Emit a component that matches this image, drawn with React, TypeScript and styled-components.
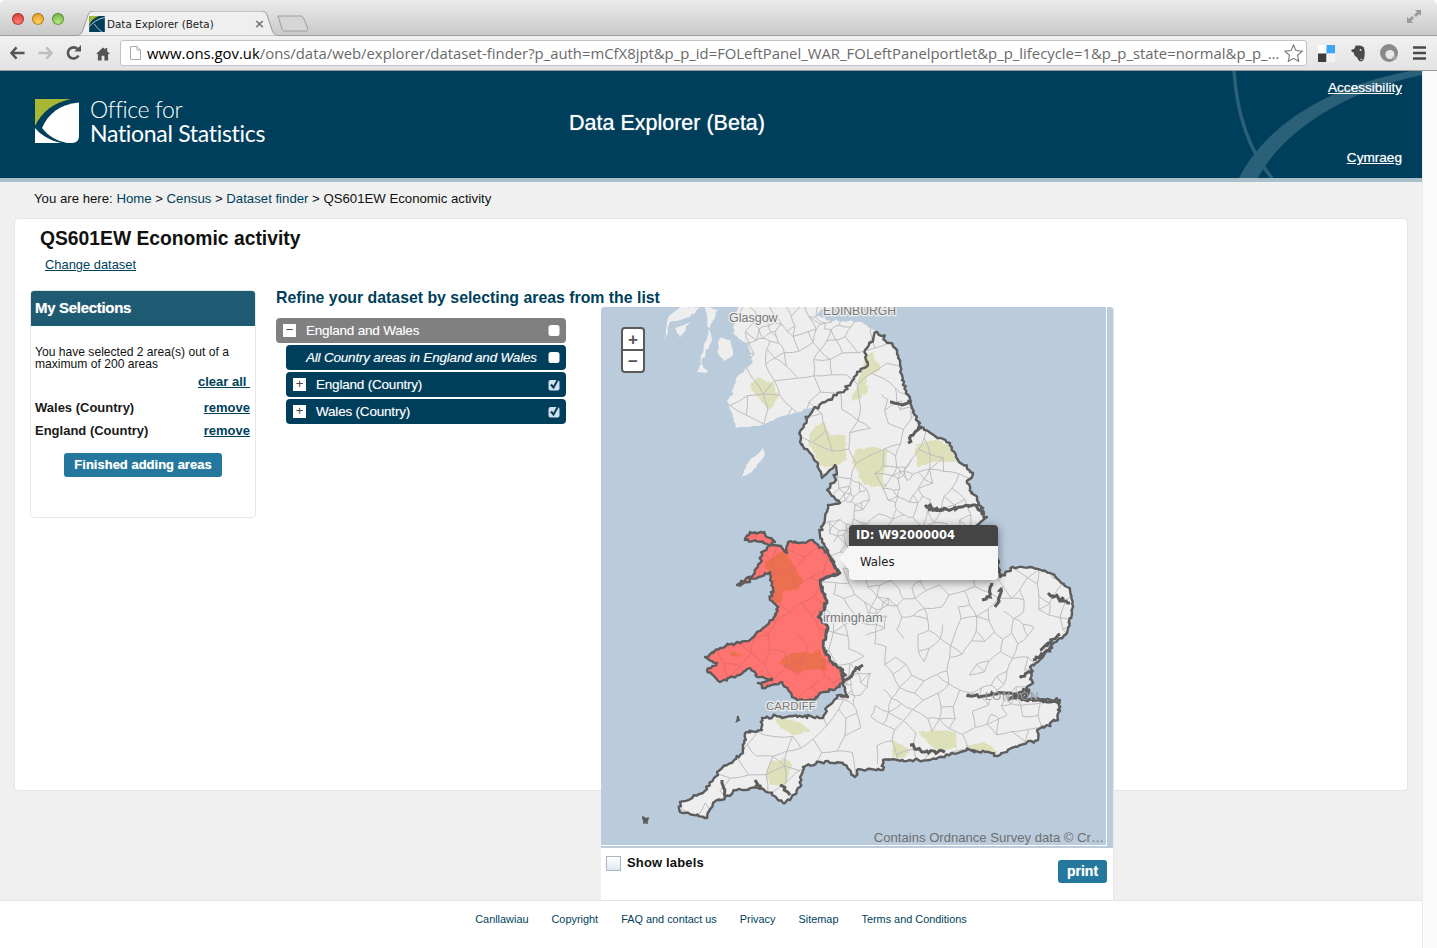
import React from "react";
import styled, { createGlobalStyle } from "styled-components";

const Global = createGlobalStyle`
  html, body { margin: 0; padding: 0; height: 948px; overflow: hidden; background: #fff; }
  body { font-family: "Liberation Sans", Arial, sans-serif; }
  * { box-sizing: border-box; }
`;

const NAVY = "#003f5c";
const TEAL = "#24789d";
const COAST = "#5c5c5c";

/* ---------- procedural map helpers ---------- */
function makeRng(seed: number) {
  let s = seed;
  return () => {
    s = (s * 16807) % 2147483647;
    return (s - 1) / 2147483646;
  };
}
type P = [number, number];

function rough(points: P[], amp: number, seed: number, step = 2.5, close = true): string {
  const r = makeRng(seed);
  r();
  r();
  const out: string[] = [];
  const n = points.length;
  const last = close ? n : n - 1;
  for (let i = 0; i < last; i++) {
    const a = points[i];
    const b = points[(i + 1) % n];
    const len = Math.hypot(b[0] - a[0], b[1] - a[1]);
    const k = Math.max(1, Math.round(len / step));
    for (let j = 0; j < k; j++) {
      const t = j / k;
      const spike = r() < 0.12 ? 2 : 1;
      const jx = j === 0 ? 0 : (r() - 0.5) * amp * 2 * spike;
      const jy = j === 0 ? 0 : (r() - 0.5) * amp * 2 * spike;
      out.push(`${(a[0] + (b[0] - a[0]) * t + jx).toFixed(1)} ${(a[1] + (b[1] - a[1]) * t + jy).toFixed(1)}`);
    }
  }
  if (!close) out.push(`${points[n - 1][0]} ${points[n - 1][1]}`);
  return "M" + out.join("L") + (close ? "Z" : "");
}

const walesPts: P[] = [
  [745, 540], [750, 532], [763, 533], [775, 542], [762, 553], [760, 563], [750, 577], [737, 585], [750, 582], [770, 572], [773, 587],
  [770, 600], [778, 607], [773, 620], [763, 628], [750, 640], [737, 642], [720, 648], [705, 657], [717, 663], [707, 670], [720, 682],
  [733, 677], [750, 668], [757, 677], [772, 680], [758, 683], [762, 688], [782, 682], [788, 690], [797, 700], [815, 700], [820, 693],
  [833, 690], [843, 683], [843, 670], [832, 662], [823, 647], [828, 627], [818, 617], [827, 603], [823, 593], [820, 580], [840, 573],
  [833, 563], [828, 553], [813, 540], [800, 543], [788, 542], [787, 553], [781, 546],
];

const englandPts: P[] = [
  [877, 332], [890, 343], [897, 350], [900, 363], [902, 380], [910, 403], [920, 427], [935, 436], [950, 443], [958, 460],
  [973, 473], [967, 483], [977, 500], [987, 517], [975, 527], [985, 540], [998, 560], [1000, 577], [1013, 567], [1030, 567],
  [1050, 573], [1067, 587], [1072, 600], [1072, 612], [1067, 633], [1050, 647], [1043, 657], [1030, 667], [1033, 683],
  [1013, 697], [1040, 700], [1060, 700], [1058, 720], [1037, 730], [1038, 740], [1020, 745], [998, 756], [985, 752], [967, 750],
  [943, 757], [930, 760], [910, 760], [883, 760], [883, 770], [857, 770], [855, 777], [843, 763], [820, 762], [803, 767], [800, 787],
  [790, 800], [783, 803], [772, 795], [760, 787], [737, 790], [725, 797], [713, 803], [707, 818], [680, 812], [680, 802], [703, 793],
  [717, 772], [743, 753], [745, 733], [762, 730], [762, 718], [790, 716], [823, 718], [827, 707], [840, 695], [848, 697],
  [843, 683], [843, 670], [832, 662], [823, 647], [828, 627], [818, 617], [827, 603], [823, 593], [820, 580], [840, 573], [833, 563], [828, 553],
  [820, 535], [825, 518], [828, 505], [840, 503], [827, 490], [836, 480], [835, 465], [822, 478], [818, 465], [812, 455],
  [800, 442], [800, 432], [812, 412], [815, 407], [828, 400], [845, 390], [857, 372], [868, 365], [865, 350],
];

const scotlandPts: P[] = [
  [740, 300], [733, 333], [747, 343], [753, 362], [737, 377], [733, 393], [727, 400], [737, 428], [763, 425], [780, 417], [815, 407],
  [828, 400], [845, 390], [857, 372], [868, 365], [865, 350], [877, 332], [860, 322], [835, 320], [815, 316], [826, 307], [830, 300],
];

const islands: P[][] = [
  [[763, 448], [750, 460], [741, 478], [752, 472], [765, 455]],
  [[720, 338], [730, 340], [733, 355], [724, 361], [717, 352]],
  [[700, 362], [704, 345], [712, 322], [718, 310], [705, 307], [712, 340], [697, 372], [708, 372]],
  [[665, 340], [670, 322], [690, 317], [700, 307], [680, 307], [668, 318]],
  [[675, 328], [690, 322], [680, 338]],
];

const parks: P[][] = [
  [[760, 378], [775, 385], [778, 398], [770, 410], [755, 395], [750, 385]],
  [[815, 425], [825, 422], [830, 435], [845, 435], [847, 460], [835, 468], [820, 465], [808, 442]],
  [[855, 450], [875, 447], [888, 452], [883, 480], [887, 487], [865, 485], [852, 462]],
  [[915, 445], [935, 440], [950, 445], [957, 462], [930, 462], [917, 468]],
  [[865, 357], [872, 352], [880, 370], [868, 375], [868, 392], [852, 402], [857, 385]],
  [[775, 718], [800, 722], [810, 730], [795, 735], [780, 728]],
  [[770, 762], [785, 758], [792, 765], [785, 785], [772, 785], [765, 775]],
  [[892, 740], [910, 750], [905, 757], [892, 757]],
  [[918, 732], [940, 730], [955, 732], [957, 748], [935, 750]],
  [[965, 745], [985, 743], [1000, 753], [980, 752]],
];

const darkPatches: P[][] = [
  [[765, 563], [783, 550], [797, 570], [803, 580], [797, 590], [783, 590], [782, 603], [773, 603], [772, 577]],
  [[778, 663], [790, 653], [813, 653], [820, 650], [828, 670], [807, 670], [797, 673]],
  [[730, 652], [742, 655], [733, 657]],
];

const estuaries: P[][] = [
  [[890, 402], [905, 404], [912, 402]],
  [[908, 443], [915, 432], [922, 428]],
  [[925, 505], [938, 510], [962, 507], [975, 505], [985, 513]],
  [[928, 510], [945, 508]],
  [[992, 583], [990, 597], [982, 600]],
  [[1002, 588], [995, 607]],
  [[1048, 593], [1070, 603]],
  [[967, 697], [1007, 693], [1027, 700], [1060, 702]],
  [[1008, 700], [1030, 690], [1025, 698]],
  [[1020, 678], [1033, 670]],
  [[1033, 660], [1053, 647]],
  [[1040, 650], [1060, 634]],
  [[910, 745], [925, 752], [945, 752]],
  [[843, 683], [863, 665]],
  [[840, 695], [848, 698]],
  [[722, 780], [725, 797]],
  [[755, 780], [760, 790]],
  [[780, 785], [790, 795]],
];

function buildRoads(): string {
  const r = makeRng(987654);
  r();
  r();
  const hubs: P[] = [[905, 498], [878, 612], [1000, 700], [905, 470], [855, 500], [770, 332], [825, 322], [850, 690], [905, 402], [840, 530]];
  const pts: P[] = [];
  const spacing = (x: number, y: number) => {
    const base = y > 470 && x > 820 && y < 730 ? 11 : 14;
    let d = base;
    for (const h of hubs) {
      d = Math.min(d, 3 + Math.hypot(x - h[0], y - h[1]) * 0.28);
    }
    return d;
  };
  for (let c = 0; c < 12000; c++) {
    const x = 655 + r() * 425;
    const y = 300 + r() * 525;
    const d = spacing(x, y);
    let ok = true;
    for (const q of pts) {
      if (Math.abs(q[0] - x) < d && Math.hypot(q[0] - x, q[1] - y) < d) {
        ok = false;
        break;
      }
    }
    if (ok) pts.push([x, y]);
  }
  const seen = new Set<string>();
  const parts: string[] = [];
  pts.forEach((a, i) => {
    const near = pts
      .map((q, j) => [Math.hypot(q[0] - a[0], q[1] - a[1]), j] as [number, number])
      .filter((e) => e[1] !== i && e[0] < 40)
      .sort((u, v) => u[0] - v[0])
      .slice(0, 3);
    near.forEach(([, j], idx) => {
      if (idx > 0 && r() > 0.62) return;
      const k = i < j ? `${i}-${j}` : `${j}-${i}`;
      if (seen.has(k)) return;
      seen.add(k);
      const b = pts[j];
      const mx = (a[0] + b[0]) / 2 + (r() - 0.5) * 4;
      const my = (a[1] + b[1]) / 2 + (r() - 0.5) * 4;
      parts.push(`M${a[0].toFixed(1)} ${a[1].toFixed(1)}Q${mx.toFixed(1)} ${my.toFixed(1)} ${b[0].toFixed(1)} ${b[1].toFixed(1)}`);
    });
  });
  return parts.join("");
}

const walesD = rough(walesPts, 1.4, 77);
const englandD = rough(englandPts, 1.4, 91);
const scotlandD = rough(scotlandPts, 1.1, 33);
const roadsD = buildRoads();

/* ---------- browser chrome ---------- */
const Browser = styled.div`
  height: 71px;
  display: flex;
  flex-direction: column;
`;
const TitleBar = styled.div`
  height: 36px;
  background: linear-gradient(#ebebeb, #c9c9c9);
  border-bottom: 1px solid #9c9c9c;
  border-radius: 5px 5px 0 0;
  display: flex;
  align-items: flex-end;
  padding: 0 15px 0 12px;
`;
const Lights = styled.div`
  display: flex;
  gap: 8px;
  align-self: flex-start;
  margin-top: 13px;
  width: 63px;
`;
const Light = styled.span<{ $c: string; $d: string }>`
  width: 12px;
  height: 12px;
  border-radius: 50%;
  background: radial-gradient(circle at 50% 75%, ${(p) => p.$c}, ${(p) => p.$d});
  box-shadow: inset 0 0 0 1px rgba(0, 0, 0, 0.25);
`;
const Tab = styled.div`
  position: relative;
  width: 205px;
  height: 25px;
  margin-bottom: -1px;
  flex: none;
  display: flex;
  align-items: center;
  padding: 0 15px 0 14px;
  font: 10.4px "DejaVu Sans", sans-serif;
  color: #222;
`;
const TabShape = styled.svg`
  position: absolute;
  left: 0;
  top: 0;
`;
const TabIcon = styled.svg`
  position: relative;
  margin-right: 2px;
  flex: none;
`;
const TabLabel = styled.span`
  position: relative;
  flex: 1;
  white-space: nowrap;
`;
const TabClose = styled.span`
  position: relative;
  font: bold 13px "DejaVu Sans", sans-serif;
  color: #777;
`;
const NewTab = styled.svg`
  flex: none;
  margin: 0 0 3px -3px;
`;
const Resize = styled.svg`
  margin-left: auto;
  align-self: flex-start;
  margin-top: 9px;
`;
const ToolBar = styled.div`
  height: 35px;
  background: linear-gradient(#f1f1f1, #e3e3e3);
  border-bottom: 1px solid #9a9a9a;
  display: flex;
  align-items: center;
  padding: 0 0 0 10px;
`;
const NavIcon = styled.svg<{ $mr: number }>`
  flex: none;
  margin-right: ${(p) => p.$mr}px;
`;
const Omnibox = styled.div`
  width: 1187px;
  height: 26px;
  flex: none;
  background: #fff;
  border: 1px solid #c2c2c2;
  border-radius: 3px;
  display: flex;
  align-items: center;
  padding: 0 3px 0 9px;
  margin-right: 11px;
`;
const Url = styled.div`
  flex: 1;
  margin-left: 6px;
  font: 14.86px "Open Sans", sans-serif;
  color: #6a6a6a;
  white-space: nowrap;
  overflow: hidden;
  b { font-weight: 400; color: #000; }
`;

/* ---------- page ---------- */
const Viewport = styled.div`
  display: flex;
  height: 877px;
`;
const Main = styled.div`
  width: 1422px;
  flex: none;
  display: flex;
  flex-direction: column;
`;
const Scrollbar = styled.div`
  flex: 1;
  background: #fafafa;
  border-left: 1px solid #ececec;
`;
const Header = styled.header`
  height: 111px;
  flex: none;
  background: ${NAVY};
  border-bottom: 4px solid #a9bfc9;
  position: relative;
  display: flex;
  align-items: flex-start;
  padding-left: 35px;
  overflow: hidden;
  color: #fff;
`;
const Swoosh = styled.svg`
  position: absolute;
  right: 0;
  top: 0;
`;
const Logo = styled.div`
  display: flex;
  gap: 10px;
  padding-top: 28px;
  width: 534px;
  flex: none;
`;
const LogoText = styled.div`
  font-family: "Lato", sans-serif;
  font-size: 23px;
  color: #fff;
  white-space: nowrap;
  margin-top: -2px;
`;
const LogoThin = styled.div`
  font-weight: 300;
  line-height: 24px;
  letter-spacing: -0.4px;
`;
const LogoStrong = styled.div`
  font-weight: 400;
  line-height: 24px;
  letter-spacing: -0.3px;
`;
const SiteTitle = styled.h1`
  margin: 38px 0 0;
  font: 400 21.5px/28px "Liberation Sans", sans-serif;
  color: #fff;
  text-shadow: 0 0 1px rgba(255, 255, 255, 0.7);
  white-space: nowrap;
`;
const HeaderLinks = styled.div`
  position: absolute;
  right: 20px;
  top: 8px;
  height: 88px;
  display: flex;
  flex-direction: column;
  justify-content: space-between;
  align-items: flex-end;
`;
const HeaderLink = styled.a`
  font-size: 13.6px;
  line-height: 18px;
  color: #fff;
  text-decoration: underline;
  text-shadow: 0 0 1px rgba(255, 255, 255, 0.6);
`;
const Content = styled.div`
  height: 718px;
  flex: none;
  background: #f0f0f0;
  padding: 0 14px;
`;
const Crumb = styled.div`
  font-size: 13.2px;
  height: 36px;
  line-height: 33px;
  padding-left: 20px;
  color: #111;
  a { color: ${NAVY}; }
`;
const Card = styled.div`
  height: 573px;
  background: #fff;
  border: 1px solid #e6e6e6;
  border-radius: 4px;
  padding: 7px 0 0 15px;
`;
const PageTitle = styled.h2`
  margin: 0 0 0 10px;
  font: 700 19.3px/26px "Liberation Sans", sans-serif;
  color: #111;
`;
const ChangeLink = styled.a`
  display: block;
  margin: 5px 0 0 15px;
  font-size: 12.9px;
  line-height: 16px;
  color: ${NAVY};
  text-decoration: underline;
`;
const Columns = styled.div`
  display: flex;
  margin-top: 17px;
  align-items: flex-start;
`;
const SidePanel = styled.aside`
  width: 226px;
  height: 228px;
  flex: none;
  background: #fff;
  border: 1px solid #e6e6e6;
  border-radius: 4px;
  overflow: hidden;
  margin-right: 20px;
`;
const PanelHead = styled.div`
  height: 36px;
  background: #1f5a73;
  color: #fff;
  font: 700 15px/36px "Liberation Sans", sans-serif;
  padding-left: 5px;
  margin: -1px -1px 0;
  text-shadow: 0 0 1px rgba(255, 255, 255, 0.5);
  letter-spacing: -0.3px;
`;
const PanelBody = styled.div`
  padding: 20px 5px 0 4px;
`;
const Info = styled.p`
  margin: 0;
  font-size: 12.1px;
  line-height: 12px;
  color: #111;
`;
const ClearRow = styled.div`
  text-align: right;
  margin-top: 5px;
  margin-bottom: 11px;
  font: 700 13px/14px "Liberation Sans", sans-serif;
  a { color: ${NAVY}; text-decoration: underline; white-space: pre; }
`;
const SelRow = styled.div`
  display: flex;
  justify-content: space-between;
  font: 700 13px/16px "Liberation Sans", sans-serif;
  color: #1a1a1a;
  margin-bottom: 7px;
  a { color: ${NAVY}; text-decoration: underline; }
`;
const FinishButton = styled.button`
  display: block;
  width: 158px;
  height: 24px;
  margin: 14px 0 0 29px;
  border: 0;
  border-radius: 3px;
  background: ${TEAL};
  color: #fff;
  font: 700 13px/24px "Liberation Sans", sans-serif;
  padding: 0;
  text-shadow: 0 0 1px rgba(255, 255, 255, 0.5);
`;
const RightCol = styled.section`
  flex: none;
  width: 838px;
`;
const TreeTitle = styled.h3`
  margin: -1px 0 0;
  font: 700 15.85px/18px "Liberation Sans", sans-serif;
  color: ${NAVY};
  white-space: nowrap;
`;
const TreeAndMap = styled.div`
  display: flex;
  align-items: flex-start;
  gap: 35px;
`;
const Tree = styled.div`
  width: 290px;
  flex: none;
  margin-top: 11px;
  display: flex;
  flex-direction: column;
  gap: 2px;
`;
const TreeRow = styled.div<{ $root?: boolean }>`
  height: 25px;
  margin-left: ${(p) => (p.$root ? 0 : 10)}px;
  background: ${(p) => (p.$root ? "#808080" : NAVY)};
  border-radius: 4px;
  display: flex;
  align-items: center;
  padding: 0 5px 0 7px;
  color: #fff;
  font-size: 13.5px;
`;
const Toggle = styled.span`
  width: 13px;
  height: 13px;
  flex: none;
  background: #fff;
  color: #444;
  font: 13px/12px "Liberation Sans", sans-serif;
  text-align: center;
  margin-right: 10px;
`;
const RowLabel = styled.span<{ $italic?: boolean }>`
  flex: 1;
  white-space: nowrap;
  letter-spacing: -0.2px;
  font-style: ${(p) => (p.$italic ? "italic" : "normal")};
  padding-left: ${(p) => (p.$italic ? 13 : 0)}px;
  text-shadow: 0 0 1px rgba(255, 255, 255, 0.35);
`;
const Tick = styled.svg`
  flex: none;
`;
const MapCol = styled.section`
  width: 513px;
  flex: none;
  height: 593px;
  background: #fff;
  border-right: 1px solid #e6e6e6;
  position: relative;
`;
const MapFrame = styled.div`
  position: relative;
  height: 541px;
  border-radius: 3px 3px 0 0;
  overflow: hidden;
  background: #bacbdc;
`;
const MapSvg = styled.svg`
  display: block;
`;
const ZoomBox = styled.div`
  position: absolute;
  left: 20px;
  top: 20px;
  width: 24px;
  height: 46px;
  border: 2px solid #5a5a5a;
  border-radius: 4px;
  background: #fff;
  display: flex;
  flex-direction: column;
`;
const ZoomBtn = styled.div`
  flex: 1;
  display: flex;
  align-items: center;
  justify-content: center;
  font: 700 17px/1 "Liberation Sans", sans-serif;
  color: #555;
  & + & { border-top: 2px solid #5a5a5a; }
`;
const Attribution = styled.div`
  position: absolute;
  right: 9px;
  bottom: 2px;
  font-size: 13.1px;
  line-height: 16px;
  color: #6f6f6f;
  white-space: nowrap;
`;
const Tip = styled.div`
  position: absolute;
  left: 248px;
  top: 218px;
  width: 149px;
  border-radius: 4px;
  background: #f6f6f6;
  box-shadow: 0 2px 10px rgba(0, 0, 0, 0.45);
`;
const TipHead = styled.div`
  height: 21px;
  background: #444;
  color: #fff;
  border-radius: 4px 4px 0 0;
  font: 700 11.5px/21px "DejaVu Sans", sans-serif;
  padding-left: 7px;
`;
const TipBody = styled.div`
  height: 34px;
  font: 11.7px/33px "DejaVu Sans", sans-serif;
  color: #222;
  padding-left: 11px;
`;
const TipArrow = styled.span`
  position: absolute;
  left: -10px;
  top: 21px;
  width: 0;
  height: 0;
  border-style: solid;
  border-width: 12px 10px 12px 0;
  border-color: transparent #f6f6f6 transparent transparent;
`;
const MapFoot = styled.div`
  display: flex;
  justify-content: space-between;
  align-items: flex-start;
  padding: 8px 6px 0 5px;
`;
const ShowLabels = styled.label`
  display: flex;
  gap: 6px;
  font: 700 13px/13px "Liberation Sans", sans-serif;
  color: #111;
  letter-spacing: 0.15px;
`;
const FakeCheck = styled.span`
  width: 15px;
  height: 15px;
  border: 1px solid #aab6c6;
  background: linear-gradient(#fff, #dfe9f3);
`;
const PrintButton = styled.button`
  width: 49px;
  height: 23px;
  margin-top: 4px;
  border: 0;
  border-radius: 3px;
  background: ${TEAL};
  color: #fff;
  padding: 0;
  font: 700 14px/23px "Liberation Sans", sans-serif;
  text-shadow: 0 0 1px rgba(255, 255, 255, 0.5);
`;
const Footer = styled.footer`
  flex: 1;
  background: #fff;
  border-top: 1px solid #e3e3e3;
  display: flex;
  justify-content: center;
  gap: 23px;
  padding: 12px 0 0 20px;
  a { font-size: 10.9px; line-height: 13px; color: ${NAVY}; text-decoration: none; }
`;

const CheckSmall = () => (
  <Tick width="13" height="13" viewBox="0 0 13 13">
    <rect x="0.5" y="1" width="11" height="11" rx="2.5" fill="#fff" />
  </Tick>
);
const CheckOn = () => (
  <Tick width="13" height="13" viewBox="0 0 13 13">
    <rect x="0.5" y="2" width="11" height="10.500" rx="2" fill="#cfe0f0" />
    <path d="M3 6.500l2.500 3L10.500 0.500" fill="none" stroke="#0b3a57" strokeWidth="2" />
  </Tick>
);

const OnsMark = () => (
  <svg width="45" height="45" viewBox="0 0 45 45" style={{ flex: "none" }}>
    <path d="M0 0H36C20 3 7 12 0 27Z" fill="#a8b834" />
    <path d="M7 29C13 15 25 5 44 3.500V37Q44 44 37 44H32C22 42 13 37 7 29Z" fill="#fff" />
    <path d="M0 29C6 36 14 41 26 44H0Z" fill="#fff" />
  </svg>
);

const MapDrawing = () => (
  <MapSvg width="512" height="541" viewBox="601 307 512 541">
    <defs>
      <clipPath id="landClip">
        <path d={englandD} />
        <path d={scotlandD} />
      </clipPath>
      <clipPath id="walesClip">
        <path d={walesD} />
      </clipPath>
    </defs>
    <path d={scotlandD} fill="#eeeeee" />
    {islands.map((pts, i) => (
      <path key={i} d={rough(pts, 1, 200 + i, 3)} fill="#eeeeee" />
    ))}
    <path d={englandD} fill="#eeeeee" />
    {parks.map((pts, i) => (
      <path key={i} d={rough(pts, 1.2, 300 + i, 3)} fill="#dde0b9" />
    ))}
    <path d={roadsD} fill="none" stroke="#bdbdbd" strokeWidth="1" clipPath="url(#landClip)" />
    <path d={walesD} fill="#ff7471" />
    {darkPatches.map((pts, i) => (
      <path key={i} d={rough(pts, 1.2, 400 + i, 3)} fill="#ec6f50" />
    ))}
    <path d={roadsD} fill="none" stroke="#dc6a67" strokeWidth="0.8" clipPath="url(#walesClip)" />
    <path d={englandD} fill="none" stroke={COAST} strokeWidth="2.4" strokeLinejoin="round" />
    <path d={walesD} fill="none" stroke={COAST} strokeWidth="2.4" strokeLinejoin="round" />
    {estuaries.map((pts, i) => (
      <path key={i} d={rough(pts, 1.7, 500 + i, 2.5, false)} fill="none" stroke={COAST} strokeWidth="3" />
    ))}
    <path d={rough([[738, 716], [739, 720], [737, 721]], 0.6, 601, 2)} fill="none" stroke={COAST} strokeWidth="2" />
    <path d={rough([[643, 817], [648, 818], [647, 823], [644, 823]], 1, 602, 2)} fill={COAST} stroke={COAST} strokeWidth="1.5" />
    <g fontFamily='"Liberation Sans", sans-serif' fontSize="12.5" fill="#777" stroke="#eee" strokeWidth="2.5" paintOrder="stroke">
      <text x="729" y="322">Glasgow</text>
      <text x="823" y="315" fontSize="12.2">EDINBURGH</text>
      <text x="823" y="622" fontSize="12.8">irmingham</text>
      <text x="766" y="710" fontSize="11.5">CARDIFF</text>
    </g>
    <text x="985" y="700" fontFamily='"Liberation Sans", sans-serif' fontSize="11.5" fill="#999" letterSpacing="0.8">LONDON</text>
    <rect x="1106" y="307" width="1" height="538" fill="#fff" />
    <rect x="601" y="845" width="506" height="1" fill="#fff" />
  </MapSvg>
);

export default function App() {
  return (
    <>
      <Global />
      <Browser>
        <TitleBar>
          <Lights>
            <Light $c="#ff7a70" $d="#c9302a" />
            <Light $c="#ffd25c" $d="#d88a1c" />
            <Light $c="#b5e67c" $d="#5fa83a" />
          </Lights>
          <Tab>
            <TabShape width="205" height="25" viewBox="0 0 205 25">
              <path d="M0 25C5 25 7 22 8 19L13 4C14 1 16 0 19 0H186C189 0 191 1 192 4L197 19C198 22 200 25 205 25Z" fill="#efefef" stroke="#9c9c9c" />
            </TabShape>
            <TabIcon width="16" height="16" viewBox="0 0 44 45">
              <path d="M0 0H44V45H0Z" fill="#003f5c" />
              <path d="M0 0H28C14 4 5 13 0 26Z" fill="#a8b834" />
              <path d="M14 22C18 28 26 38 36 45" fill="none" stroke="#fff" strokeWidth="2" />
              <path d="M0 30C10 18 24 8 44 4" fill="none" stroke="#fff" strokeWidth="2" />
            </TabIcon>
            <TabLabel>Data Explorer (Beta)</TabLabel>
            <TabClose>×</TabClose>
          </Tab>
          <NewTab width="32" height="17" viewBox="0 0 32 17">
            <path d="M1 1H24C25 1 26 2 27 4L31 14C31 15 30 16 29 16H7C6 16 5 15 5 14Z" fill="#d6d6d6" stroke="#9e9e9e" />
          </NewTab>
          <Resize width="16" height="15" viewBox="0 0 16 15">
            <path d="M15 1H9l2 2-3 3 2 2 3-3 2 2ZM1 14H7L5 12l3-3-2-2-3 3-2-2Z" fill="#9a9a9a" />
          </Resize>
        </TitleBar>
        <ToolBar>
          <NavIcon $mr={13} width="15" height="14" viewBox="0 0 16 14">
            <path d="M7 1L1.500 7 7 13M2 7H15.500" fill="none" stroke="#555" strokeWidth="2.600" />
          </NavIcon>
          <NavIcon $mr={13} width="15" height="14" viewBox="0 0 16 14">
            <path d="M9 1l5.500 6L9 13M14 7H.5" fill="none" stroke="#bdbdbd" strokeWidth="2.600" />
          </NavIcon>
          <NavIcon $mr={15} width="15" height="16" viewBox="0 0 15 16">
            <path d="M12.500 10.500A5.600 5.600 0 1 1 11.500 4" fill="none" stroke="#555" strokeWidth="2.600" />
            <path d="M8.500 6.500H15V0Z" fill="#555" />
          </NavIcon>
          <NavIcon $mr={10} width="14" height="15" viewBox="0 0 15 15">
            <path d="M7.500 1L0 8h2v7h4v-5h3v5h4V8h2l-3-2.800V1.500h-2v1.800Z" fill="#555" />
          </NavIcon>
          <Omnibox>
            <svg width="11" height="14" viewBox="0 0 11 14" style={{ flex: "none" }}>
              <path d="M.5.5H7L10.500 4v9.500H.5Z M7 .5V4h3.500" fill="#fff" stroke="#aaa" />
            </svg>
            <Url>
              <b>www.ons.gov.uk</b>/ons/data/web/explorer/dataset-finder?p_auth=mCfX8jpt&amp;p_p_id=FOLeftPanel_WAR_FOLeftPanelportlet&amp;p_p_lifecycle=1&amp;p_p_state=normal&amp;p_p_…
            </Url>
            <svg width="19" height="18" viewBox="0 0 19 18" style={{ flex: "none" }}>
              <path d="M9.500 1l2.500 5.600 6 .7-4.500 4 1.200 6-5.200-3-5.200 3 1.200-6-4.500-4 6-.7Z" fill="#fff" stroke="#777" strokeWidth="1.100" />
            </svg>
          </Omnibox>
          <NavIcon $mr={16} width="17" height="17" viewBox="0 0 18 18">
            <rect x="0" y="0" width="9" height="9" fill="#fff" />
            <rect x="9" y="0" width="9" height="9" fill="#3ba6f5" />
            <rect x="0" y="9" width="9" height="9" fill="#3d3d3d" />
            <rect x="9" y="9" width="9" height="9" fill="#f2f2f2" />
          </NavIcon>
          <NavIcon $mr={15} width="14" height="17" viewBox="0 0 14 17">
            <path d="M4.500.8C7 0 11 .3 12.500 2 14 4.500 14 10 13.200 13 12.600 15.800 10.500 16.800 8.800 16.200 7.200 15.600 6.800 13.600 6.200 12.500 5 11.500 3.500 11 3 9L2.800 7.200H1.200L0 5.200 3.600 3.400Z" fill="#4a4a4a" />
            <path d="M9.300 14.600q1-.8 2-.2" fill="none" stroke="#e8e8e8" strokeWidth="0.900" />
            <circle cx="9.500" cy="5" r="0.900" fill="#e8e8e8" />
          </NavIcon>
          <NavIcon $mr={15} width="18" height="18" viewBox="0 0 18 18">
            <circle cx="9" cy="9" r="9" fill="#8a8a8a" />
            <circle cx="10" cy="10.500" r="4.500" fill="#e8e8e8" />
            <path d="M14 16l-2-3 4-1 1 3Z" fill="#a5a5a5" />
          </NavIcon>
          <NavIcon $mr={0} width="13" height="14" viewBox="0 0 13 14">
            <path d="M0 1.500H13M0 7H13M0 12.500H13" stroke="#4a4a4a" strokeWidth="2.600" />
          </NavIcon>
        </ToolBar>
      </Browser>
      <Viewport>
        <Main>
          <Header>
            <Swoosh width="190" height="107" viewBox="0 0 190 107">
              <path d="M2 0C5 45 17 80 40 107" fill="none" stroke="#2b6079" strokeWidth="3.500" />
              <path d="M7 107C30 62 85 15 190 -2V4C105 22 48 65 26 107Z" fill="#2b6079" />
            </Swoosh>
            <Logo>
              <OnsMark />
              <LogoText>
                <LogoThin>Office for</LogoThin>
                <LogoStrong>National Statistics</LogoStrong>
              </LogoText>
            </Logo>
            <SiteTitle>Data Explorer (Beta)</SiteTitle>
            <HeaderLinks>
              <HeaderLink>Accessibility</HeaderLink>
              <HeaderLink>Cymraeg</HeaderLink>
            </HeaderLinks>
          </Header>
          <Content>
            <Crumb>
              You are here: <a>Home</a> &gt; <a>Census</a> &gt; <a>Dataset finder</a> &gt; QS601EW Economic activity
            </Crumb>
            <Card>
              <PageTitle>QS601EW Economic activity</PageTitle>
              <ChangeLink>Change dataset</ChangeLink>
              <Columns>
                <SidePanel>
                  <PanelHead>My Selections</PanelHead>
                  <PanelBody>
                    <Info>You have selected 2 area(s) out of a maximum of 200 areas</Info>
                    <ClearRow>
                      <a>clear all </a>
                    </ClearRow>
                    <SelRow>
                      <span>Wales (Country)</span>
                      <a>remove</a>
                    </SelRow>
                    <SelRow>
                      <span>England (Country)</span>
                      <a>remove</a>
                    </SelRow>
                    <FinishButton>Finished adding areas</FinishButton>
                  </PanelBody>
                </SidePanel>
                <RightCol>
                  <TreeTitle>Refine your dataset by selecting areas from the list</TreeTitle>
                  <TreeAndMap>
                    <Tree>
                      <TreeRow $root>
                        <Toggle>−</Toggle>
                        <RowLabel>England and Wales</RowLabel>
                        <CheckSmall />
                      </TreeRow>
                      <TreeRow>
                        <RowLabel $italic>All Country areas in England and Wales</RowLabel>
                        <CheckSmall />
                      </TreeRow>
                      <TreeRow>
                        <Toggle>+</Toggle>
                        <RowLabel>England (Country)</RowLabel>
                        <CheckOn />
                      </TreeRow>
                      <TreeRow>
                        <Toggle>+</Toggle>
                        <RowLabel>Wales (Country)</RowLabel>
                        <CheckOn />
                      </TreeRow>
                    </Tree>
                    <MapCol>
                      <MapFrame>
                        <MapDrawing />
                        <ZoomBox>
                          <ZoomBtn>+</ZoomBtn>
                          <ZoomBtn>−</ZoomBtn>
                        </ZoomBox>
                        <Tip>
                          <TipArrow />
                          <TipHead>ID: W92000004</TipHead>
                          <TipBody>Wales</TipBody>
                        </Tip>
                        <Attribution>Contains Ordnance Survey data © Cr…</Attribution>
                      </MapFrame>
                      <MapFoot>
                        <ShowLabels>
                          <FakeCheck />
                          Show labels
                        </ShowLabels>
                        <PrintButton>print</PrintButton>
                      </MapFoot>
                    </MapCol>
                  </TreeAndMap>
                </RightCol>
              </Columns>
            </Card>
          </Content>
          <Footer>
            <a>Canllawiau</a>
            <a>Copyright</a>
            <a>FAQ and contact us</a>
            <a>Privacy</a>
            <a>Sitemap</a>
            <a>Terms and Conditions</a>
          </Footer>
        </Main>
        <Scrollbar />
      </Viewport>
    </>
  );
}
